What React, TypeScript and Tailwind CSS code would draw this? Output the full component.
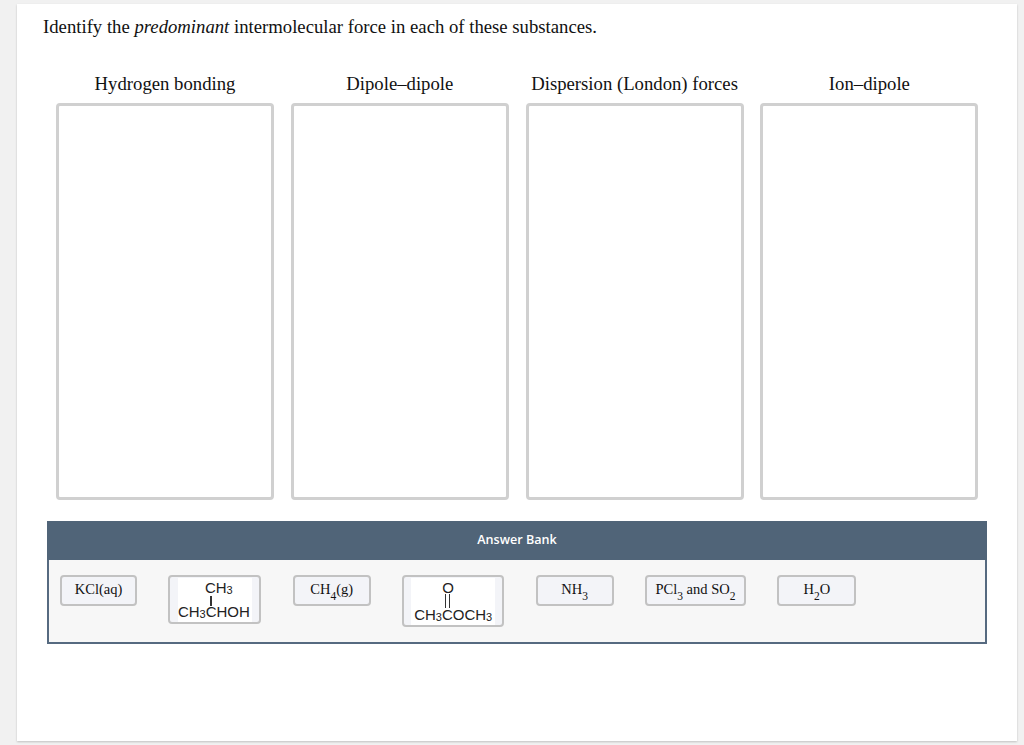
const columns = ["Hydrogen bonding", "Dipole–dipole", "Dispersion (London) forces", "Ion–dipole"];

function Sub({ children }: { children: string }) {
  return <sub className="text-[11.5px] leading-none align-[-3px]">{children}</sub>;
}

function Chip({ width, children }: { width: string; children: React.ReactNode }) {
  return (
    <div className={`h-[31px] ${width} flex items-center justify-center pb-[2px] rounded-[4px] border-2 border-[#c2c2c2] bg-[#f3f4f8] font-['Liberation_Serif'] text-[14.5px] text-[#111]`}>
      {children}
    </div>
  );
}

function Isopropanol() {
  return (
    <div className="h-[49px] w-[93px] flex justify-center rounded-[4px] border-2 border-[#c2c2c2] bg-[#f3f4f8] pt-px">
      <div className="w-[74px] h-[44px] bg-white flex flex-col font-['Liberation_Sans'] text-[15px] leading-[15px] text-[#222]">
        <div className="pl-[27px] pt-[2px]">
          CH<span className="text-[11px] align-[-1px]">3</span>
        </div>
        <div className="ml-[32px] -my-[2px] h-[16px] w-[2px] bg-[#333]" />
        <div className="whitespace-nowrap">
          CH<span className="text-[11px] align-[-1px]">3</span>CHOH
        </div>
      </div>
    </div>
  );
}

function Acetone() {
  return (
    <div className="h-[52px] w-[102px] flex justify-center rounded-[4px] border-2 border-[#c2c2c2] bg-[#f3f4f8] pt-px">
      <div className="w-[84px] h-[47px] bg-white flex flex-col font-['Liberation_Sans'] text-[15px] leading-[15px] text-[#222]">
        <div className="pl-[31px] pt-[2px]">O</div>
        <div className="ml-[34px] -my-[1px] h-[14px] w-[5px] border-x border-[#333]" />
        <div className="whitespace-nowrap text-center">
          CH<span className="text-[11px] align-[-1px]">3</span>COCH<span className="text-[11px] align-[-1px]">3</span>
        </div>
      </div>
    </div>
  );
}

export default function App() {
  return (
    <div className="h-[745px] w-[1024px] overflow-hidden bg-[#f1f1f1] pl-[17px] pt-[4px]">
      <div className="h-[737px] w-[1000px] bg-white shadow-[0_1px_2px_rgba(0,0,0,0.2)] font-['Liberation_Serif'] text-[#111]">
        <h1 className="pl-[26px] pt-[12px] text-[18.72px] leading-[21px] font-normal">
          Identify the <em>predominant</em> intermolecular force in each of these substances.
        </h1>

        <div className="mt-[36px] pl-[39px] flex gap-[16.8px]">
          {columns.map((name) => (
            <div key={name} className="w-[218px]">
              <p className="text-center text-[18.72px] leading-[21px] whitespace-nowrap">{name}</p>
              <div className="mt-[9px] h-[397px] rounded-[4px] border-[3px] border-[#d0d0d0] bg-white" />
            </div>
          ))}
        </div>

        <div className="ml-[30px] mt-[21px] w-[940px] border-2 border-t-0 border-[#566a80]">
          <div className="-mx-[2px] h-[39px] pb-[1px] bg-[#506478] flex items-center justify-center font-['Open_Sans'] text-[12.6px] font-semibold text-white">
            Answer Bank
          </div>
          <div className="h-[82px] bg-[#f7f7f7] pl-[11px] pt-[15px] flex items-start gap-[31.4px]">
            <Chip width="w-[77px]">KCl(aq)</Chip>
            <Isopropanol />
            <Chip width="w-[78px]">
              <span>CH<Sub>4</Sub>(g)</span>
            </Chip>
            <Acetone />
            <Chip width="w-[78px]">
              <span>NH<Sub>3</Sub></span>
            </Chip>
            <Chip width="w-[101px]">
              <span className="whitespace-nowrap">PCl<Sub>3</Sub> and SO<Sub>2</Sub></span>
            </Chip>
            <Chip width="w-[79px]">
              <span>H<Sub>2</Sub>O</span>
            </Chip>
          </div>
        </div>
      </div>
    </div>
  );
}
